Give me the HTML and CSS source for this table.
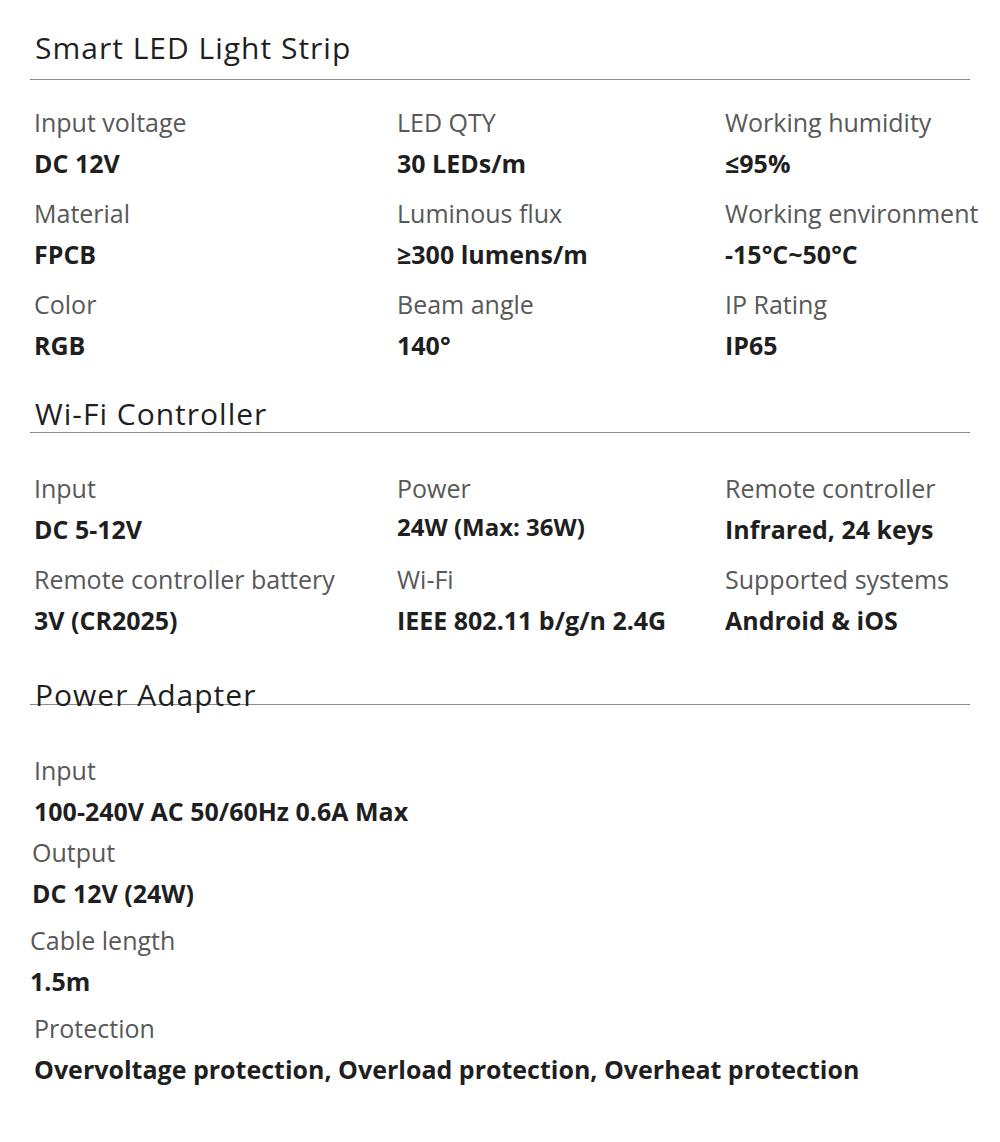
FILE: index.html
```html
<!DOCTYPE html>
<html lang="en">
<head>
    <meta charset="utf-8">
    <title>Smart LED Light Strip - Specs</title>
    <meta name="viewport" content="width=device-width, initial-scale=1.0">
    <link rel="stylesheet" href="styles.css">
</head>
<body>
    <div class="specs">

        <div class="section strip">
            <h2 class="section-title">Smart LED Light Strip</h2>
            <div class="spec-grid">
                <div class="spec"><div class="label">Input voltage</div><div class="value">DC 12V</div></div>
                <div class="spec"><div class="label">LED QTY</div><div class="value">30 LEDs/m</div></div>
                <div class="spec"><div class="label">Working humidity</div><div class="value">≤95%</div></div>
                <div class="spec"><div class="label">Material</div><div class="value">FPCB</div></div>
                <div class="spec"><div class="label">Luminous flux</div><div class="value">≥300 lumens/m</div></div>
                <div class="spec"><div class="label">Working environment</div><div class="value">-15°C~50°C</div></div>
                <div class="spec"><div class="label">Color</div><div class="value">RGB</div></div>
                <div class="spec"><div class="label">Beam angle</div><div class="value">140°</div></div>
                <div class="spec"><div class="label">IP Rating</div><div class="value">IP65</div></div>
            </div>
        </div>

        <div class="section controller">
            <h2 class="section-title">Wi-Fi Controller</h2>
            <div class="spec-grid">
                <div class="spec"><div class="label">Input</div><div class="value">DC 5-12V</div></div>
                <div class="spec"><div class="label">Power</div><div class="value small">24W (Max: 36W)</div></div>
                <div class="spec"><div class="label">Remote controller</div><div class="value">Infrared, 24 keys</div></div>
                <div class="spec"><div class="label">Remote controller battery</div><div class="value">3V (CR2025)</div></div>
                <div class="spec"><div class="label">Wi-Fi</div><div class="value">IEEE 802.11 b/g/n 2.4G</div></div>
                <div class="spec"><div class="label">Supported systems</div><div class="value">Android &amp; iOS</div></div>
            </div>
        </div>

        <div class="section adapter">
            <h2 class="section-title">Power Adapter</h2>
            <div class="spec-list">
                <div class="spec"><div class="label">Input</div><div class="value">100-240V AC 50/60Hz 0.6A Max</div></div>
                <div class="spec shift-2"><div class="label">Output</div><div class="value">DC 12V (24W)</div></div>
                <div class="spec shift-4 spaced"><div class="label">Cable length</div><div class="value">1.5m</div></div>
                <div class="spec spaced"><div class="label">Protection</div><div class="value">Overvoltage protection, Overload protection, Overheat protection</div></div>
            </div>
        </div>

    </div>
</body>
</html>
```

FILE: styles.css
```css
body {
    margin: 0;
    background-color: #ffffff;
    font-family: "Open Sans", "Noto Sans", sans-serif;
    color: #222222;
}
.specs {
    padding: 0 30px;
    width: 940px;
}
.section-title {
    margin: 0;
    padding-left: 5px;
    font-size: 30px;
    letter-spacing: 1px;
    font-weight: 400;
    color: #1f1f1f;
    border-bottom: 1px solid #8c8c8c;
    white-space: nowrap;
}
.strip .section-title {
    margin-top: 28px;
    line-height: 40px;
    padding-bottom: 11px;
}
.controller .section-title {
    margin-top: 30px;
    line-height: 36px;
}
.adapter .section-title {
    margin-top: 45px;
    line-height: 18px;
}
.spec-grid {
    display: grid;
    grid-template-columns: 363px 328px 1fr;
    row-gap: 9px;
    padding-left: 4px;
}
.strip .spec-grid {
    margin-top: 22px;
}
.controller .spec-grid {
    margin-top: 35px;
}
.spec-list {
    margin-top: 45px;
    padding-left: 4px;
}
.label {
    font-size: 25px;
    line-height: 40px;
    color: #585858;
    white-space: nowrap;
}
.value {
    font-size: 25px;
    line-height: 42px;
    font-weight: 700;
    color: #1f1f1f;
    white-space: nowrap;
}
.value.small {
    font-size: 24px;
    line-height: 38px;
}
.shift-2 {
    margin-left: -2px;
}
.shift-4 {
    margin-left: -4px;
}
.spaced {
    margin-top: 6px;
}
```
